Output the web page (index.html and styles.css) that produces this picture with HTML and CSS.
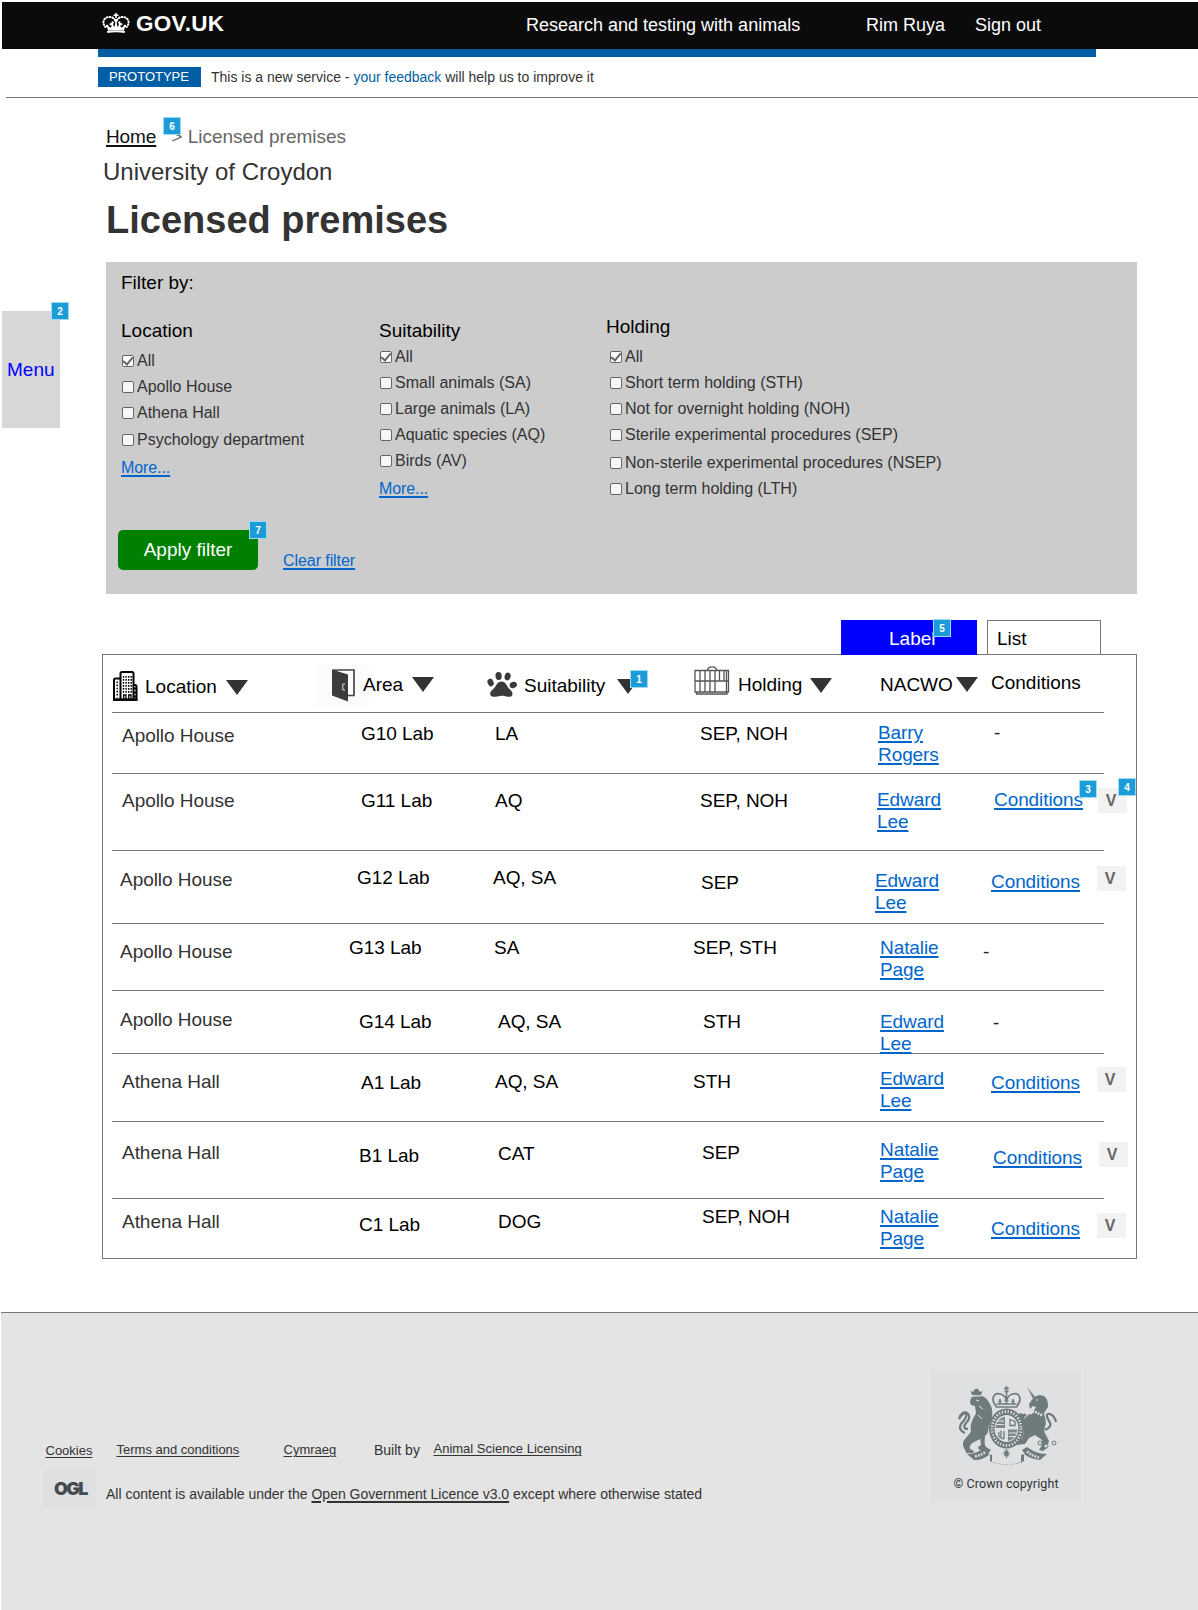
FILE: index.html
```html
<!DOCTYPE html>
<html lang="en">
<head>
<meta charset="utf-8">
<title>Licensed premises</title>
<link rel="stylesheet" href="styles.css">
</head>
<body>
<div class="page">
  <header class="top">
    <svg class="crown" viewBox="0 0 28 20" fill="#fff">
      <path d="M13.200 0h1.600v1.500h1.700v1.500h-1.700v2h-1.600V3h-1.700V1.500h1.700z"/>
      <g fill="none" stroke="#fff" stroke-width="2" stroke-linecap="round" stroke-dasharray=".8 2.100">
        <path d="M13 7C10.500 2.500 3 3 1.600 8c-.5 2 .2 4 1.600 6M15 7c2.500-4.500 10-4 11.400 1 .5 2-.2 4-1.600 6"/>
      </g>
      <path d="M14 6c1.600 0 2.200 1.500 1.200 2.600l-.5.8.7 4.300c1.300-.5 1.500-2 1.400-3.200-.9-.1-1-1.700 0-2.100 1.200-.4 2 .6 1.700 1.800 1.200-.7 2.300.4 1.800 1.500-.4.800-1.300.8-1.700.1-.3 1-.2 2.100.9 2.700 1.500-.2 2.200-1.300 2.300-2.500.9-.7 2.700-.3 2.500 1.300-.1.900-.8 1.200-1.500 1.100l-.9 3.300c-5.300-1-10.500-1-15.800 0l-.9-3.300c-.7.100-1.400-.2-1.500-1.100-.2-1.600 1.600-2 2.500-1.300.1 1.200.8 2.300 2.300 2.500 1.100-.6 1.200-1.700.9-2.700-.4.700-1.300.7-1.700-.1-.5-1.100.6-2.200 1.800-1.500-.3-1.200.5-2.200 1.700-1.800 1 .4.900 2 0 2.100-.1 1.200.1 2.700 1.400 3.200l.7-4.300-.5-.8C11.800 7.500 12.400 6 14 6z"/>
      <path d="M5 18c5.800-1.100 12.200-1.100 18 0l-.4 1.900c-5.600-.9-11.600-.9-17.200 0z"/>
    </svg>
    <span class="logo">GOV.UK</span>
    <span class="service">Research and testing with animals</span>
    <span class="user">Rim Ruya</span>
    <span class="signout">Sign out</span>
  </header>
  <div class="bluebar"></div>
  <div class="phase">
    <span class="tag">PROTOTYPE</span>
    <span class="phase-text">This is a new service - <a>your feedback</a> will help us to improve it</span>
  </div>
  <hr class="rule">

  <div class="body">
    <aside class="menu">Menu</aside>
    <main>
      <nav class="crumbs"><a>Home</a><span>&gt; Licensed premises</span></nav>
      <p class="org">University of Croydon</p>
      <h1>Licensed premises</h1>

      <section class="filter">
        <p class="filter-title">Filter by:</p>
        <div class="groups">
          <div class="group g-location">
            <h2>Location</h2>
            <label><i class="box on"></i>All</label>
            <label><i class="box"></i>Apollo House</label>
            <label><i class="box"></i>Athena Hall</label>
            <label class="nudge1"><i class="box"></i>Psychology department</label>
            <a class="link">More...</a>
          </div>
          <div class="group g-suit">
            <h2>Suitability</h2>
            <label><i class="box on"></i>All</label>
            <label><i class="box"></i>Small animals (SA)</label>
            <label><i class="box"></i>Large animals (LA)</label>
            <label><i class="box"></i>Aquatic species (AQ)</label>
            <label><i class="box"></i>Birds (AV)</label>
            <a class="link">More...</a>
          </div>
          <div class="group g-hold">
            <h2>Holding</h2>
            <label><i class="box on"></i>All</label>
            <label><i class="box"></i>Short term holding (STH)</label>
            <label><i class="box"></i>Not for overnight holding (NOH)</label>
            <label><i class="box"></i>Sterile experimental procedures (SEP)</label>
            <label class="nudge2"><i class="box"></i>Non-sterile experimental procedures (NSEP)</label>
            <label><i class="box"></i>Long term holding (LTH)</label>
          </div>
        </div>
        <div class="actions">
          <span class="apply">Apply filter</span>
          <a class="link">Clear filter</a>
        </div>
      </section>

      <div class="tabs"><span class="tab tab-label">Label</span><span class="tab tab-list">List</span></div>

      <section class="table">
        <div class="row head">
          <div class="h-loc">
            <svg width="25" height="30" viewBox="0 0 25 30" fill="none" stroke="#000">
              <path d="M7.500 28V2.500q0-1.500 1.500-1.500h10q1.500 0 1.500 1.500V28M7 7.500H2.500Q1 7.500 1 9v19.500h22.500V15.500q0-1.500-1.500-1.500h-1.500" stroke-width="2"/>
              <path d="M10.500 5v17M13.100 5v17M15.700 5v17M18.200 5v17" stroke-width="1.400" stroke-dasharray="1.700 1.300"/>
              <path d="M4.200 10.500v16" stroke-width="1.500" stroke-dasharray="1.600 1.500"/>
              <path d="M22 16.500v10" stroke-width="2" stroke-dasharray="2 2"/>
              <path d="M10.700 28.500v-4.500h2.300v4.500zM15.700 28.500v-4.500h2.300v4.500z" stroke-width="1.300"/>
              <path d="M0 28.800h24.500" stroke-width="2.200"/>
            </svg>
            <span>Location</span><i class="tri"></i>
          </div>
          <div class="h-area">
            <svg width="52" height="43" viewBox="0 0 52 43">
              <rect width="52" height="43" fill="#fbfbfb"/>
              <path d="M16 6h21v25.500h-6.500" fill="#fff" stroke="#444" stroke-width="1.700"/>
              <path d="M15 5.500l16 5v27l-16-6z" fill="#3c3c3c"/>
              <path d="M28 20h-2.200v6H28" fill="none" stroke="#ddd" stroke-width="1"/>
            </svg>
            <span>Area</span><i class="tri"></i>
          </div>
          <div class="h-suit">
            <svg width="30" height="25" viewBox="0 0 30 25" fill="#3a3a3a">
              <ellipse cx="11.600" cy="4" rx="3.100" ry="4" transform="rotate(-4 11.600 4)"/>
              <ellipse cx="20.600" cy="4.500" rx="3" ry="4" transform="rotate(16 20.600 4.500)"/>
              <ellipse cx="3.600" cy="10.500" rx="3" ry="3.900" transform="rotate(-22 3.600 10.500)"/>
              <ellipse cx="26.300" cy="13" rx="3.700" ry="3" transform="rotate(-15 26.300 13)"/>
              <path d="M14.500 9.500c3.500 0 4.800 3 6.300 5.500 1.700 2.800 4.700 4 4.700 7 0 2.400-2.200 3.100-4.500 2.800-2.400-.3-3.500-1-6-1s-4 .8-6.500 1C5.500 25 3.200 24.500 3.200 22c0-3.300 3-4.200 4.800-7 1.600-2.500 3-5.500 6.500-5.500z"/>
            </svg>
            <span>Suitability</span><i class="tri"></i>
          </div>
          <div class="h-hold">
            <svg width="36" height="29" viewBox="0 0 36 29" fill="none" stroke="#555" stroke-width="1.300">
              <path d="M1 4.500h33.500v21.500H1zM1 15h33.500M6 4.500V26M11 4.500V26M16 4.500V26M21 4.500V26M25.500 4.500V15M30 4.500V15M2.500 26v2h30.500v-2M13.500 4C14 1.500 16 .8 18 .8s4.200.7 4.700 3.200M32.500 4.500V26"/>
            </svg>
            <span>Holding</span><i class="tri"></i>
          </div>
          <div class="h-nac"><span>NACWO</span><i class="tri"></i></div>
          <div class="h-cond">Conditions</div>
        </div>
        <div class="row r1"><div class="loc">Apollo House</div><div class="area">G10 Lab</div><div class="suit">LA</div><div class="hold">SEP, NOH</div><div class="nac"><a>Barry<br>Rogers</a></div><div class="cond">-</div></div>
        <div class="row r2"><div class="loc">Apollo House</div><div class="area">G11 Lab</div><div class="suit">AQ</div><div class="hold">SEP, NOH</div><div class="nac"><a>Edward<br>Lee</a></div><div class="cond"><a>Conditions</a></div><b class="v">V</b></div>
        <div class="row r3"><div class="loc">Apollo House</div><div class="area">G12 Lab</div><div class="suit">AQ, SA</div><div class="hold">SEP</div><div class="nac"><a>Edward<br>Lee</a></div><div class="cond"><a>Conditions</a></div><b class="v">V</b></div>
        <div class="row r4"><div class="loc">Apollo House</div><div class="area">G13 Lab</div><div class="suit">SA</div><div class="hold">SEP, STH</div><div class="nac"><a>Natalie<br>Page</a></div><div class="cond">-</div></div>
        <div class="row r5"><div class="loc">Apollo House</div><div class="area">G14 Lab</div><div class="suit">AQ, SA</div><div class="hold">STH</div><div class="nac"><a>Edward<br>Lee</a></div><div class="cond">-</div></div>
        <div class="row r6"><div class="loc">Athena Hall</div><div class="area">A1 Lab</div><div class="suit">AQ, SA</div><div class="hold">STH</div><div class="nac"><a>Edward<br>Lee</a></div><div class="cond"><a>Conditions</a></div><b class="v">V</b></div>
        <div class="row r7"><div class="loc">Athena Hall</div><div class="area">B1 Lab</div><div class="suit">CAT</div><div class="hold">SEP</div><div class="nac"><a>Natalie<br>Page</a></div><div class="cond"><a>Conditions</a></div><b class="v">V</b></div>
        <div class="row r8"><div class="loc">Athena Hall</div><div class="area">C1 Lab</div><div class="suit">DOG</div><div class="hold">SEP, NOH</div><div class="nac"><a>Natalie<br>Page</a></div><div class="cond"><a>Conditions</a></div><b class="v">V</b></div>
      </section>
    </main>
  </div>

  <footer class="footer">
    <div class="foot-main">
      <div class="foot-links">
        <a class="f1">Cookies</a><a class="f2">Terms and conditions</a><a class="f3">Cymraeg</a><span class="f4">Built by</span><a class="f5">Animal Science Licensing</a>
      </div>
      <div class="foot-licence">
        <span class="ogl">OGL</span>
        <span class="licence">All content is available under the <a>Open Government Licence v3.0</a> except where otherwise stated</span>
      </div>
    </div>
    <div class="crest">
      <svg width="100" height="82" viewBox="0 0 100 82">
        <g fill="#6f7a7d">
          <!-- lion -->
          <path d="M14 10l-1.500-4 2.500 1 1.500-2.500 2-1 2 1L22 7l2.500-1L23 10z"/>
          <path d="M13 13c3-3 9-3 13-1 4 2 5 6 7 9 2 4 1 8 1 12l-3 7-1 7c-2 5-8 7-12 9-4 2-7 4-6 8l4 2-1 2H8c0-3-3-5-3-9 0-5 6-8 8-13-1-4 0-7 1-10l4-8-1-7-4-1-1-3z"/>
          <path d="M26 46c2 6 0 9 1 14l2 5-8 0-1-3 3-2-1-9z"/>
          <!-- unicorn -->
          <path d="M69 2l8 10-2 1.500z"/>
          <path d="M71 19l5-7 5-2 5 1c4 3 4 7 4 11l-4 6c1 5 3 9 1 14-1 4-1 6 1 8l3 6-2 7-4 3-4-1 3-5 0-5-7-5-6 3-4 6-9 1-1-3 7-3 2-8c-3-3-3-7-1-12l-5-3 2-3 6 2 6-1 4-7-3-1-3 3z"/>
          <path d="M67 28l-5 4-3 7 3 4 5-2 2-7z"/>
          <!-- motto scroll -->
          <path d="M9 69c8 0 13-3 19-7l5 3-3 4 4 1v7c10 3 20 3 29 0v-7l4-1-3-4 5-3c6 4 11 7 20 7l-7 6c-8-1-12-3-16-6v7c-8 5-26 5-34 0v-7c-5 4-9 6-16 6z"/>
        </g>
        <g fill="none" stroke="#6f7a7d" stroke-width="2.200">
          <path d="M7 48c-5-2-6-5-4-9 2-3 7-7 5-10-1-2-4 0-7 5 1-5 5-8 8-6 4 3 2 7-1 10-3 4-2 6 2 6"/>
          <path d="M87 45c5-2 7-5 4-9-3-5-3-8 1-7 3 1 5 4 6 8"/>
        </g>
        <path d="M17 71.500c5-1 8-3 11-5M38 79q11 2.500 21 0M69 66.500c4 3 7 5 12 6" fill="none" stroke="#dee0e2" stroke-width="2.500" stroke-dasharray="1.800 1.200"/>
        <!-- crown and shield -->
        <ellipse cx="48.500" cy="43.500" rx="17.500" ry="20" fill="#6f7a7d"/>
        <ellipse cx="48.500" cy="43.500" rx="14.500" ry="17" fill="none" stroke="#dee0e2" stroke-width="2.800" stroke-dasharray="1.300 1.700"/>
        <ellipse cx="48.500" cy="43.500" rx="12" ry="13.500" fill="#dee0e2"/>
        <g fill="#6f7a7d">
          <path d="M47 31.500v11.500H37.500c.5-6 4-10 9.500-11.500zM50 44.500h9.500c-.5 6-4 10-9.500 11.500z" opacity=".85"/>
        </g>
        <path d="M38 36h8M38 39.500h8M51 48h8M51 51.500h7" stroke="#dee0e2" stroke-width="1"/>
        <g fill="none" stroke="#6f7a7d" stroke-width="1.300">
          <path d="M52 34.500l5 2v4h-5zM41 47c-1 4 0 6 5 7M43 45.500v8M46 46v8"/>
          <path d="M38.500 22c-7-9-2-15 4-13 3 1 5 3 6 6 1-3 3-5 6-6 6-2 11 4 4 13z" fill="#dee0e2" stroke-width="1.700"/>
          <path d="M38.500 19h20M48.500 7v12M42 14v5M55 14v5M40.500 16.500h3M46.500 15.500h4M53.500 16.500h3" stroke-width="1.600"/>
          <path d="M46 3.500h5M48.500 1v5M46.500 6.500h4" stroke-width="1.700"/>
          <path d="M48.500 64v10M45 69h7M46.500 65.500l4 6M50.500 65.500l-4 6" stroke="#dee0e2" stroke-width="3"/>
          <path d="M48.500 64v9M45.500 68.500h6M46.500 66l4 5M50.500 66l-4 5"/>
          <path d="M80 58a2 2 0 1 0 4 0 2 2 0 1 0-4 0M86 61a2 2 0 1 0 4 0 2 2 0 1 0-4 0M94 58a2 2 0 1 0 4 0 2 2 0 1 0-4 0" fill="#dee0e2" stroke-width="1"/>
        </g>
        <path d="M71 26c5 0 9 2 14 5" fill="none" stroke="#dee0e2" stroke-width="2.500" stroke-dasharray="2 1"/>
        <path d="M13 11h10M18 15l3 1M21 21l4 3M20 30l4 4M78 15h2M66 33l4-3" stroke="#dee0e2" stroke-width="1"/>
      </svg>
      <span>© Crown copyright</span>
    </div>
  </footer>

  <span class="note n1">1</span><span class="note n2">2</span><span class="note n3">3</span><span class="note n4">4</span>
  <span class="note n5">5</span><span class="note n6">6</span><span class="note n7">7</span>
</div>
</body>
</html>
```
FILE: styles.css
```css
* { box-sizing: border-box; }
body { margin: 0; background: #fff; font-family: "Liberation Sans", Arial, sans-serif; font-size: 19px; line-height: 22px; color: #000; }
p, h1, h2 { margin: 0; font-weight: normal; }
a { color: #06c; text-decoration: underline; text-decoration-thickness: 2px; text-underline-offset: 2px; }
.page { position: relative; width: 1198px; height: 1610px; padding-top: 2px; overflow: hidden; white-space: nowrap; }

/* header */
.top { display: grid; grid-template-columns: 34px 390px 340px 109px auto; margin-left: 2px; padding-left: 100px; height: 47px; background: #0b0b0b; color: #fff; font-size: 18px; line-height: 20px; }
.crown { width: 28px; height: 20px; margin-top: 11px; }
.logo { font-size: 22.500px; font-weight: bold; line-height: 24px; padding-top: 10px; letter-spacing: .25px; }
.service, .user, .signout { padding-top: 13px; }
.bluebar { width: 998px; height: 8px; margin-left: 98px; background: #005ea5; }
.phase { display: flex; align-items: flex-start; gap: 10px; height: 40px; padding: 10px 0 0 98px; }
.tag { width: 103px; height: 20px; padding-left: 11px; background: #005ea5; color: #fff; font-size: 13px; line-height: 19px; }
.phase-text { font-size: 14px; line-height: 20px; color: #333; }
.phase-text a { color: #005ea5; text-decoration: none; }
.rule { height: 1px; margin: 0 0 0 6px; border: 0; background: #777; }

/* body */
.body { display: flex; height: 1214px; padding-left: 2px; }
.menu { width: 58px; height: 117px; margin: 213px 42px 0 0; padding: 48px 0 0 5px; background: #d7d7d7; color: #00f; }
main { width: 1035px; padding-top: 28px; }
.crumbs { display: flex; gap: 15px; padding-left: 4px; height: 32px; color: #666; }
.crumbs a { color: #111; letter-spacing: -.1px; }
.org { padding-left: 1px; height: 40px; font-size: 24px; line-height: 28px; color: #333; }
h1 { padding-left: 4px; height: 64px; font-size: 38px; line-height: 44px; font-weight: bold; color: #333; }

/* filter panel */
.filter { height: 332px; margin-left: 4px; background: #ccc; }
.filter-title { height: 52px; padding: 10px 0 0 15px; }
.groups { display: flex; height: 216px; }
.group { display: flex; flex-direction: column; align-items: flex-start; color: #333; font-size: 16px; }
.group h2 { height: 28px; font-size: 19px; color: #000; }
.g-location { width: 258px; padding: 6px 0 0 15px; }
.g-suit { width: 227px; padding: 6px 0 0 15px; }
.g-suit h2 { height: 24px; }
.g-hold { padding: 2px 0 0 15px; }
.group label { display: flex; align-items: center; height: 26px; margin-left: 1px; }
.g-hold label { margin-left: 4px; }
.group .link { line-height: 18px; margin-top: 6px; letter-spacing: -.1px; }
.group .nudge1 { margin-top: 1px; }
.group .nudge2 { margin-top: 2px; }
.box { width: 12px; height: 12px; margin: 0 3px 1px 0; border: 1px solid #666; border-radius: 2px; background: #f7f7f7; }
.box.on { display: flex; justify-content: center; background: #fff; }
.box.on::after { content: ""; width: 4px; height: 8px; margin-top: -1px; border: solid #666; border-width: 0 2px 2px 0; transform: rotate(40deg); }
.actions { display: flex; padding-left: 12px; }
.apply { width: 140px; height: 40px; border-radius: 5px; background: #008000; color: #fff; line-height: 40px; text-align: center; margin-right: 25px; }
.actions .link { font-size: 16px; line-height: 18px; margin-top: 22px; letter-spacing: -.07px; }
.g-hold label { padding-left: 4px; margin-left: 0; }

/* tabs */
.tabs { display: flex; gap: 10px; height: 34px; margin: 26px 0 0 739px; }
.tab-label { width: 136px; height: 35px; padding-left: 48px; background: #00f; color: #fff; line-height: 37px; z-index: 1; }
.tab-list { width: 114px; height: 35px; padding-left: 9px; border: 1px solid #777; line-height: 35px; }

/* table */
.table { width: 1035px; height: 605px; padding-left: 9px; border: 1px solid #777; }
.row { display: grid; grid-template-columns: 236px 145px 199px 183px 107px 115px 31px; width: 992px; border-bottom: 1px solid #777; }
.row a { letter-spacing: -.08px; }
.row:last-child { border-bottom: 0; }
.loc { padding: var(--loc); color: #333; letter-spacing: -.04px; }
.area { padding: var(--area); letter-spacing: -.04px; }
.suit { padding: var(--suit); letter-spacing: -.04px; }
.hold { padding: var(--hold); letter-spacing: -.04px; }
.nac { padding: var(--nac); }
.cond { padding: var(--cond); color: #222; }
.v { width: 29px; height: 25px; margin: var(--v); background: #f2f2f2; color: #666; font-size: 16px; line-height: 25px; padding-right: 3px; text-align: center; }
.head { height: 58px; grid-template-columns: 205px 170px 207px 181px 116px auto; }
.head > div { display: flex; align-items: flex-start; }
.tri { width: 22px; height: 15px; background: #333; clip-path: polygon(0 0, 100% 0, 50% 100%); }
.h-loc svg { margin: 16px 0 0 1px; }
.h-loc span { margin: 21px 8px 0 7px; width: 73px; }
.h-loc .tri { margin-top: 25px; }
.h-area svg { margin-top: 9px; }
.h-area span { margin: 19px 8px 0 -6px; width: 41px; }
.h-area .tri { margin-top: 22px; }
.h-suit svg { margin-top: 17px; }
.h-suit span { margin: 20px 9px 0 7px; width: 84px; }
.h-suit .tri { margin-top: 24px; }
.h-hold svg { margin-top: 11px; }
.h-hold span { margin: 19px 8px 0 8px; width: 64px; }
.h-hold .tri { margin-top: 23px; }
.h-nac span { margin: 19px 0 0 5px; width: 76px; }
.h-nac .tri { margin-top: 22px; }
.head .h-cond { padding-top: 17px; }
.r1 { height: 61px; --loc: 12px 0 0 10px; --area: 10px 0 0 13px; --suit: 10px 0 0 2px; --hold: 10px 0 0 8px; --nac: 9px 0 0 3px; --cond: 9px 0 0 12px; }
.r2 { height: 77px; --loc: 16px 0 0 10px; --area: 16px 0 0 13px; --suit: 16px 0 0 2px; --hold: 16px 0 0 8px; --nac: 15px 0 0 2px; --cond: 15px 0 0 12px; --v: 14px 0 0 1px; }
.r3 { height: 73px; --loc: 18px 0 0 8px; --area: 16px 0 0 9px; --suit: 16px 0 0 0; --hold: 21px 0 0 9px; --nac: 19px 0 0 0; --cond: 20px 0 0 9px; --v: 15px 0 0 0; }
.r4 { height: 67px; --loc: 17px 0 0 8px; --area: 13px 0 0 1px; --suit: 13px 0 0 1px; --hold: 13px 0 0 1px; --nac: 13px 0 0 5px; --cond: 17px 0 0 1px; }
.r5 { height: 63px; --loc: 18px 0 0 8px; --area: 20px 0 0 11px; --suit: 20px 0 0 5px; --hold: 20px 0 0 11px; --nac: 20px 0 0 5px; --cond: 21px 0 0 11px; }
.r6 { height: 68px; --loc: 17px 0 0 10px; --area: 18px 0 0 13px; --suit: 17px 0 0 2px; --hold: 17px 0 0 1px; --nac: 14px 0 0 5px; --cond: 18px 0 0 9px; --v: 13px 0 0 0; }
.r7 { height: 77px; --loc: 20px 0 0 10px; --area: 23px 0 0 11px; --suit: 21px 0 0 5px; --hold: 20px 0 0 10px; --nac: 17px 0 0 5px; --cond: 25px 0 0 11px; --v: 20px 0 0 2px; }
.r8 { height: 59px; --loc: 12px 0 0 10px; --area: 15px 0 0 11px; --suit: 12px 0 0 5px; --hold: 7px 0 0 10px; --nac: 7px 0 0 5px; --cond: 19px 0 0 9px; --v: 14px 0 0 0; }

/* footer */
.footer { display: flex; height: 298px; margin-left: 1px; border-top: 1px solid #777; background: #e4e4e4; color: #333; font-size: 13px; line-height: 16px; }
.foot-main { width: 930px; padding: 129px 0 0 42px; }
.foot-main a { color: #333; text-decoration-thickness: 1px; }
.foot-links { display: flex; height: 28px; }
.f1 { width: 71px; margin-left: 2.500px; padding-top: 1px; }
.f2 { width: 167px; }
.f3 { width: 90.500px; }
.f4 { width: 59.500px; font-size: 14px; }
.f5 { margin-top: -1px; }
.foot-licence { display: flex; }
.ogl { width: 53px; height: 37px; background: #dee0e2; color: #444a4d; font: 900 18px/25px Inter, sans-serif; letter-spacing: -1.700px; padding: 6px 0 0 11px; }
.licence { font-size: 14px; margin: 16px 0 0 10px; }
.foot-main .licence a { text-decoration-thickness: 2px; }
.crest { display: flex; flex-direction: column; align-items: center; width: 150px; height: 132px; margin-top: 57px; padding-top: 15px; background: #dee0e2; }
.crest svg { margin-left: 4px; }
.crest span { margin-top: 9px; font: 12.500px/16px Roboto, sans-serif; letter-spacing: .1px; }

/* annotation markers */
.note { position: absolute; width: 18px; height: 18px; border: 1px solid #9fdcf2; background: #1b9cd8; color: #fff; font-size: 10px; font-weight: bold; line-height: 17px; text-align: center; z-index: 2; }
.n1 { left: 630px; top: 670px; }
.n2 { left: 51px; top: 302px; }
.n3 { left: 1079px; top: 780px; }
.n4 { left: 1118px; top: 778px; }
.n5 { left: 933px; top: 619px; }
.n6 { left: 163px; top: 117px; }
.n7 { left: 249px; top: 521px; }
```
